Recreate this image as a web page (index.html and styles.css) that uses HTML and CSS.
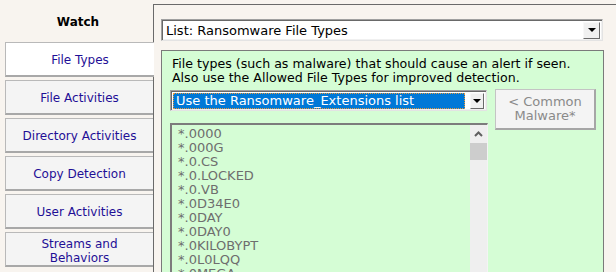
FILE: index.html
```html
<!DOCTYPE html>
<html>
<head>
<meta charset="utf-8">
<link rel="stylesheet" href="styles.css">
</head>
<body>
<div class="app">
  <div class="sidebar">
    <div class="watch">Watch</div>
    <div class="tab active">File Types</div>
    <div class="tab">File Activities</div>
    <div class="tab">Directory Activities</div>
    <div class="tab">Copy Detection</div>
    <div class="tab">User Activities</div>
    <div class="tab two">Streams and<br>Behaviors</div>
  </div>
  <div class="panel">
    <div class="select top-select">
      <span class="select-text">List: Ransomware File Types</span>
      <span class="arrow-btn"><span class="tri"></span></span>
    </div>
    <div class="green">
      <div class="desc">File types (such as malware) that should cause an alert if seen.<br>Also use the Allowed File Types for improved detection.</div>
      <div class="row">
        <div class="select combo">
          <span class="highlight">Use the Ransomware_Extensions list</span>
          <span class="arrow-btn small"><span class="tri"></span></span>
        </div>
        <div class="btn">&lt; Common<br>Malware*</div>
      </div>
      <div class="list">
        <div class="items">
          <div>*.0000</div>
          <div>*.000G</div>
          <div>*.0.CS</div>
          <div>*.0.LOCKED</div>
          <div>*.0.VB</div>
          <div>*.0D34E0</div>
          <div>*.0DAY</div>
          <div>*.0DAY0</div>
          <div>*.0KILOBYPT</div>
          <div>*.0L0LQQ</div>
          <div>*.0MEGA</div>
        </div>
        <div class="scrollbar">
          <svg class="up" width="17" height="14" viewBox="0 0 17 14"><path d="M5 9 L8.5 5.5 L12 9" fill="none" stroke="#606060" stroke-width="2"/></svg>
          <div class="thumb"></div>
        </div>
      </div>
    </div>
  </div>
</div>
</body>
</html>
```
FILE: styles.css
```css
* { box-sizing: border-box; }
html, body { margin: 0; padding: 0; }
body {
  background: #f8f4ef;
  font-family: "DejaVu Sans", Verdana, sans-serif;
  font-size: 12px;
  width: 616px;
  height: 272px;
  overflow: hidden;
}
.app { display: flex; height: 272px; overflow: hidden; }
.sidebar {
  width: 153px;
  padding-left: 5px;
  flex: none;
  position: relative;
  z-index: 1;
}
.watch {
  height: 42px;
  display: flex;
  align-items: center;
  justify-content: center;
  font-weight: bold;
  color: #000;
  padding-top: 2px;
  padding-right: 2px;
  font-size: 12px;
}
.tab {
  height: 35px;
  margin-bottom: 3px;
  background: #f4f4f4;
  border: 1px solid #b9b9b9;
  border-bottom: 2px solid #a8a8a8;
  border-right: none;
  color: #1f0f96;
  display: flex;
  align-items: center;
  justify-content: center;
  text-align: center;
  line-height: 14px;
  padding-top: 1px;
}
.tab.active {
  background: #fff;
  margin-right: -1px;
}
.tab.two { padding-top: 3px; }
.panel {
  flex: 1;
  margin-top: 4px;
  border-top: 1px solid #6a6a6a;
  border-left: 1px solid #6a6a6a;
  padding: 14px 0 0 7px;
}
.select {
  display: flex;
  align-items: center;
  background: #fff;
  border: 1px solid;
  border-color: #a0a0a0 #e3e3e3 #e3e3e3 #a0a0a0;
  box-shadow: inset 1px 1px 0 #696969, inset -1px -1px 0 #f0f0f0;
}
.top-select {
  width: 442px;
  height: 22px;
  padding: 2px 2px 2px 4px;
  font-size: 13px;
  color: #000;
}
.select-text { flex: 1; }
.arrow-btn {
  width: 17px;
  height: 17px;
  background: #f0f0f0;
  border: 1px solid;
  border-color: #f8f8f8 #6a6a6a #6a6a6a #f8f8f8;
  display: flex;
  align-items: center;
  justify-content: center;
}
.arrow-btn.small { width: 14px; height: 16px; margin-left: 5px; }
.tri {
  width: 0; height: 0;
  border-left: 4px solid transparent;
  border-right: 4px solid transparent;
  border-top: 4px solid #000;
}
.green {
  margin-top: 9px;
  width: 443px;
  height: 240px;
  background: #d5fdd5;
  border: 1px solid #7a7a7a;
  border-bottom: none;
  padding: 6px 7px 0 8px;
  overflow: hidden;
}
.desc {
  padding-left: 2px;
  line-height: 14px;
  color: #000;
  font-size: 12.6px;
  white-space: nowrap;
}
.row {
  display: flex;
  align-items: flex-start;
  margin-top: 4px;
}
.combo {
  width: 317px;
  height: 21px;
  margin-top: 1px;
  padding: 2px;
  font-size: 13px;
}
.highlight {
  flex: 1;
  height: 16px;
  background: #0078d7;
  color: #fff;
  outline: 1px dotted #e89a3a;
  outline-offset: -1px;
  line-height: 16px;
  padding-left: 3px;
  white-space: nowrap;
  overflow: hidden;
}
.btn {
  margin-left: 8px;
  width: 101px;
  height: 41px;
  background: #f4f4f4;
  border: 1px solid #c4c4c4;
  border-right: 2px solid #a6a6a6;
  border-bottom: 2px solid #a6a6a6;
  color: #8a8a8a;
  font-size: 13px;
  line-height: 14px;
  text-align: center;
  padding-top: 5px;
}
.list {
  margin-top: -7px;
  width: 318px;
  height: 160px;
  border-top: 2px solid #7c7c7c;
  border-left: 2px solid #7c7c7c;
  border-right: 1px solid #f4f4f4;
  display: flex;
}
.items {
  flex: 1;
  padding: 2px 0 0 6px;
  line-height: 14px;
  color: #6e6e6e;
  font-size: 13px;
}
.scrollbar {
  width: 17px;
  background: #efefef;
  display: flex;
  flex-direction: column;
}
.up { display: block; margin-top: 2px; }
.thumb {
  margin-top: 2px;
  height: 17px;
  background: #cdcdcd;
}
```
